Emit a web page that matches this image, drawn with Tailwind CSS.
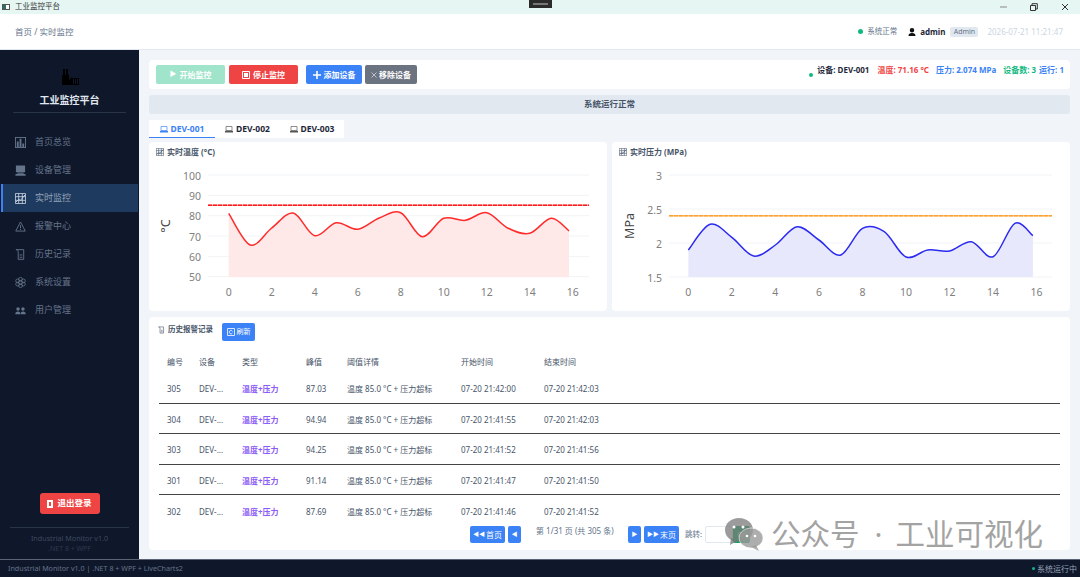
<!DOCTYPE html>
<html lang="zh-CN">
<head>
    <meta charset="UTF-8">
    <title>工业监控平台</title>
    <script src="https://cdn.jsdelivr.net/npm/@tailwindcss/browser@4"></script>
</head>
<body class="bg-[#f1f5f9] font-['Noto_Sans','Noto_Sans_CJK_SC',sans-serif]">
<svg width="0" height="0" class="absolute">
    <symbol id="i-bars" viewBox="0 0 12 12"><rect x="0.5" y="0.5" width="11" height="11" fill="none" stroke="currentColor"/><path fill="currentColor" d="M2 5h2v6H2zM5 2h2v9H5zM8 7h2v4H8z"/></symbol>
    <symbol id="i-device" viewBox="0 0 12 12"><path fill="currentColor" d="M1 0.5h10v7.5H1zM2.500 8.500h7v1h-7zM0.500 9.800h11v2h-11z"/></symbol>
    <symbol id="i-chart" viewBox="0 0 12 12"><path fill="none" stroke="currentColor" stroke-width="0.9" d="M.5.5h11v11H.5zM4 .5v11M8 .5v11M.5 4h11M.5 8h11"/><path fill="none" stroke="currentColor" d="M1 10l3-3 2 1 5-6"/></symbol>
    <symbol id="i-warn" viewBox="0 0 12 12"><path fill="none" stroke="currentColor" d="M6 1L.8 11h10.4z"/><path stroke="currentColor" d="M6 4.500v3.500M6 8.800v1"/></symbol>
    <symbol id="i-scroll" viewBox="0 0 12 12"><path fill="none" stroke="currentColor" d="M1 .7h8.500v10.600H3.500V2.500M1 .7c1.400 0 2 .6 2.500 1.800M5 6.500h3M5 9h3"/></symbol>
    <symbol id="i-gear" viewBox="0 0 12 12"><g fill="none" stroke="currentColor" stroke-width="0.9"><circle cx="6" cy="6" r="2"/><circle cx="6" cy="2.400" r="2"/><circle cx="6" cy="9.600" r="2"/><circle cx="2.800" cy="4.200" r="2"/><circle cx="9.200" cy="4.200" r="2"/><circle cx="2.800" cy="7.800" r="2"/><circle cx="9.200" cy="7.800" r="2"/></g></symbol>
    <symbol id="i-users" viewBox="0 0 12 12"><path fill="currentColor" d="M3.300 2.500a1.800 1.800 0 110 3.800 1.800 1.800 0 010-3.800zM8.700 2.500a1.800 1.800 0 110 3.800 1.800 1.800 0 010-3.800zM.3 10c0-2 1-3 3-3s2.500 1 2.500 3zM6.200 10c0-2 .5-3 2.500-3s3 1 3 3z"/></symbol>
    <symbol id="i-tab" viewBox="0 0 12 10"><path fill="none" stroke="currentColor" d="M1.500.5h9v6h-9z"/><path fill="currentColor" d="M0 7h12v2.500H0z"/></symbol>
</svg>

<div class="w-[1080px] h-[577px] flex flex-col overflow-hidden relative">
    <!-- title bar -->
    <div class="h-[14px] bg-[#e6f6f3] flex items-center pl-[2px] shrink-0 relative">
        <div class="w-[8px] h-[6px] border border-[#555] bg-[linear-gradient(90deg,#2f6f6a_50%,#fff_50%)]"></div>
        <span class="ml-[5px] text-[7.5px] text-[#333]">工业监控平台</span>
        <div class="absolute left-[529px] top-0 w-[23px] h-[8px] bg-[#2b2b2b] flex items-center justify-center"><div class="w-[15px] h-[2px] bg-[#777]"></div></div>
        <div class="ml-auto flex items-center text-[#444]">
            <svg class="w-[8px] h-[8px] mr-[22px]" viewBox="0 0 8 8"><path d="M0 4h7" stroke="#888" stroke-width="1"/></svg>
            <svg class="w-[8px] h-[8px] mr-[23px]" viewBox="0 0 8 8"><path d="M.5 2.500h5v5h-5zM2 2.500V.7h5.300V6H5.500" fill="none" stroke="#333"/></svg>
            <svg class="w-[8px] h-[8px] mr-[11px]" viewBox="0 0 8 8"><path d="M1 1l6 6M7 1L1 7" stroke="#333"/></svg>
        </div>
    </div>
    <!-- header -->
    <header class="h-[36px] bg-white border-b border-[#e2e8f0] flex items-center px-[15px] shrink-0">
        <span class="text-[8.5px] text-[#64748b] pt-[1px]">首页 / 实时监控</span>
        <div class="ml-auto flex items-center">
            <span class="w-[5px] h-[5px] rounded-full bg-[#10b981]"></span>
            <span class="ml-[4px] text-[7.500px] text-[#64748b]">系统正常</span>
            <svg class="ml-[11px] w-[8px] h-[8px]" viewBox="0 0 8 8"><path fill="#111" d="M4 0a2 2 0 110 4.500A2 2 0 014 0zM.5 8c0-2 1-3 3.500-3s3.500 1 3.500 3z"/></svg>
            <span class="ml-[4px] text-[8px] font-bold text-[#1e293b]">admin</span>
            <span class="ml-[5px] w-[28px] h-[10px] rounded-[2px] bg-[#e2e8f0] text-[7px] leading-[10px] text-center text-[#64748b]">Admin</span>
            <span class="ml-[9px] mr-[2px] text-[8px] text-[#cbd5e1]">2026-07-21 11:21:47</span>
        </div>
    </header>

    <div class="flex flex-1 min-h-0">
        <!-- sidebar -->
        <aside class="w-[139px] shrink-0 bg-[#0f172a] flex flex-col">
            <div class="h-[43px] pt-[18px] flex flex-col items-center">
                <svg class="w-[18px] h-[18px]" viewBox="0 0 18 18"><path fill="#000" d="M1 17V7h1V1h2v6h1V1h2v6h1v5l3-3v1h7v7zM12 11v5h1v-5zM14 11v5h1v-5zM16 11v5h1v-5z"/></svg>
            </div>
            <div class="text-center text-[10px] leading-[14px] font-bold text-[#e2e8f0]">工业监控平台</div>
            <div class="mx-[13px] mt-[5px] border-t border-[#283548]"></div>
            <nav class="mt-[15px] flex flex-col text-[9px] text-[#64748b]">
                <a class="h-[28px] flex items-center pl-[15px] gap-[9px]"><svg class="w-[11px] h-[11px]"><use href="#i-bars"/></svg>首页总览</a>
                <a class="h-[28px] flex items-center pl-[15px] gap-[9px]"><svg class="w-[11px] h-[11px]"><use href="#i-device"/></svg>设备管理</a>
                <a class="h-[28px] flex items-center pl-[12px] gap-[9px] ml-[1px] mr-[1px] bg-[#1e3a5f] border-l-2 border-[#3b82f6] text-[#94a3b8]"><svg class="w-[11px] h-[11px] text-[#cbd5e1]"><use href="#i-chart"/></svg>实时监控</a>
                <a class="h-[28px] flex items-center pl-[15px] gap-[9px]"><svg class="w-[11px] h-[11px]"><use href="#i-warn"/></svg>报警中心</a>
                <a class="h-[28px] flex items-center pl-[15px] gap-[9px]"><svg class="w-[11px] h-[11px]"><use href="#i-scroll"/></svg>历史记录</a>
                <a class="h-[28px] flex items-center pl-[15px] gap-[9px]"><svg class="w-[11px] h-[11px]"><use href="#i-gear"/></svg>系统设置</a>
                <a class="h-[28px] flex items-center pl-[15px] gap-[9px]"><svg class="w-[11px] h-[11px]"><use href="#i-users"/></svg>用户管理</a>
            </nav>
            <div class="mt-auto flex flex-col items-center">
                <button class="w-[60px] h-[21px] rounded-[3px] bg-[#ef4444] text-white text-[8.500px] font-bold flex items-center justify-center gap-[4px]">
                    <svg class="w-[6px] h-[8px]" viewBox="0 0 6 8"><path fill="#fff" d="M0 0h6v8H0z"/><path fill="#ef4444" d="M2 2h2v4H2z"/></svg>退出登录
                </button>
                <div class="w-[119px] mt-[13px] border-t border-[#283548]"></div>
                <div class="mt-[5px] text-[7.200px] leading-[11px] text-[#3b4a60]">Industrial Monitor v1.0</div>
                <div class="text-[7px] leading-[9px] mb-[6px] text-[#2c3a50]">.NET 8 + WPF</div>
            </div>
        </aside>

        <!-- main -->
        <main class="flex-1 min-w-0 px-[10px] pt-[10px] pb-[9px] flex flex-col bg-[#f1f5f9]">
            <!-- toolbar -->
            <div class="h-[29px] bg-white rounded-[4px] flex items-center pl-[7px] pr-[6px] shrink-0">
                <button class="w-[69px] h-[19px] rounded-[2px] bg-[#a0e4cb] text-white text-[8px] font-bold flex items-center justify-center gap-[3px]"><span class="text-[7px]">▶</span>开始监控</button>
                <button class="ml-[4px] w-[69px] h-[19px] rounded-[2px] bg-[#ef4444] text-white text-[8px] font-bold flex items-center justify-center gap-[3px]"><svg class="w-[8px] h-[8px]" viewBox="0 0 8 8"><path fill="none" stroke="#fff" d="M.5.5h7v7h-7z"/><path fill="#fff" d="M2 2h4v4H2z"/></svg>停止监控</button>
                <button class="ml-[8px] w-[56px] h-[19px] rounded-[2px] bg-[#3b82f6] text-white text-[8px] font-bold flex items-center justify-center gap-[3px]"><svg class="w-[8px] h-[8px]" viewBox="0 0 8 8"><path d="M4 0v8M0 4h8" stroke="#fff" stroke-width="1.600"/></svg>添加设备</button>
                <button class="ml-[3px] w-[52px] h-[19px] rounded-[2px] bg-[#6b7280] text-white text-[8px] font-bold flex items-center justify-center gap-[2px]"><svg class="w-[6px] h-[6px]" viewBox="0 0 6 6"><path d="M.5.5l5 5M5.500.5l-5 5" stroke="#d1d5db" stroke-width="0.800"/></svg>移除设备</button>
                <div class="ml-auto flex items-start text-[8px] font-bold h-[19px] -mt-[2px]">
                    <span class="w-[4px] h-[4px] rounded-full bg-[#10b981] mt-[9px] mr-[4px]"></span>
                    <span class="text-[#1e293b]">设备: DEV-001</span>
                    <span class="ml-[8px] text-[#ef4444]">温度: 71.16 °C</span>
                    <span class="ml-[7px] text-[#3b82f6]">压力: 2.074 MPa</span>
                    <span class="ml-[7px] text-[#10b981]">设备数: 3</span>
                    <span class="ml-[3px] text-[#3b82f6]">运行: 1</span>
                </div>
            </div>
            <!-- banner -->
            <div class="mt-[6px] h-[19px] rounded-[3px] bg-[#e2e8f0] flex items-center justify-center text-[8.500px] font-bold text-[#475569] shrink-0">系统运行正常</div>
            <!-- tabs -->
            <div class="mt-[6px] h-[18px] w-[195px] bg-white flex text-[8.500px] font-bold text-[#1e293b] shrink-0">
                <div class="w-[66px] pt-[1px] flex items-center justify-center gap-[3px] border-b border-[#3b82f6] text-[#3b82f6]"><svg class="w-[8px] h-[7px]"><use href="#i-tab"/></svg>DEV-001</div>
                <div class="w-[65px] pt-[1px] flex items-center justify-center gap-[3px]"><svg class="w-[8px] h-[7px] text-[#555]"><use href="#i-tab"/></svg>DEV-002</div>
                <div class="w-[64px] pt-[1px] flex items-center justify-center gap-[3px]"><svg class="w-[8px] h-[7px] text-[#555]"><use href="#i-tab"/></svg>DEV-003</div>
            </div>
            <!-- charts -->
            <div class="mt-[4px] h-[169px] flex gap-[5px] shrink-0">
                <div class="w-[458px] bg-white rounded-[4px] relative">
                    <div class="absolute left-[7px] top-[4px] flex items-center gap-[3px] text-[8px] font-bold text-[#475569]"><svg class="w-[8px] h-[8px]"><use href="#i-chart"/></svg>实时温度 (°C)</div>
                    <svg id="chart-temp" width="458" height="169" viewBox="149 142 458 169"></svg>
                </div>
                <div class="w-[458px] bg-white rounded-[4px] relative">
                    <div class="absolute left-[7px] top-[4px] flex items-center gap-[3px] text-[8px] font-bold text-[#475569]"><svg class="w-[8px] h-[8px]"><use href="#i-chart"/></svg>实时压力 (MPa)</div>
                    <svg id="chart-press" width="458" height="169" viewBox="612 142 458 169"></svg>
                </div>
            </div>
            <!-- history table -->
            <div class="mt-[6px] h-[233px] bg-white rounded-[4px] px-[10px] flex flex-col shrink-0">
                <div class="h-[25px] flex items-start shrink-0">
                    <div class="mt-[7px] flex items-center gap-[3px] text-[7.500px] font-bold text-[#475569] -ml-[1px]"><svg class="w-[7px] h-[8px]"><use href="#i-scroll"/></svg>历史报警记录</div>
                    <button class="ml-[9px] mt-[6px] w-[33px] h-[18px] rounded-[2px] bg-[#3b82f6] text-white text-[7px] flex items-center justify-center gap-[2px]"><svg class="w-[8px] h-[8px]" viewBox="0 0 8 8"><path fill="none" stroke="#fff" stroke-width="0.800" d="M.5.5h7v7h-7zM5.500 3.500a1.700 1.700 0 10-.1 1.500"/></svg>刷新</button>
                </div>
                <div id="alarm-table" class="mt-[10px] text-[8px] text-[#475569]"></div>
                <div class="mt-auto mb-[7px] h-[17px] flex items-center text-[8px] text-white relative shrink-0">
                    <div class="ml-[311px] w-[35px] h-[17px] rounded-[2px] bg-[#3b82f6] flex items-center justify-center gap-[1px]"><span class="text-[6px]">◀◀</span>首页</div>
                    <div class="ml-[3px] w-[13px] h-[17px] rounded-[2px] bg-[#3b82f6] flex items-center justify-center text-[6px]">◀</div>
                    <div class="ml-[15px] w-[77px] -mt-[8px] text-[#64748b] whitespace-nowrap">第 1/31 页 (共 305 条)</div>
                    <div class="ml-[15px] w-[13px] h-[17px] rounded-[2px] bg-[#3b82f6] flex items-center justify-center text-[6px]">▶</div>
                    <div class="ml-[3px] w-[35px] h-[17px] rounded-[2px] bg-[#3b82f6] flex items-center justify-center gap-[1px]"><span class="text-[6px]">▶▶</span>末页</div>
                    <div class="ml-[6px] text-[#64748b] text-[7.500px]">跳转:</div>
                    <div class="ml-[3px] w-[28px] h-[17px] rounded-[2px] border border-[#e2e8f0] bg-white"></div>
                    <div class="w-[17px] h-[17px] rounded-[2px] bg-[#10a765] flex items-center justify-center text-[6.500px]">Go</div>
                </div>
            </div>
        </main>
    </div>

    <!-- status bar -->
    <footer class="h-[18px] bg-[#0f172a] flex items-center pl-[8px] pr-[3px] text-[7.150px] shrink-0 border-t border-[#cbd5e1]/40">
        <span class="text-[#64748b]">Industrial Monitor v1.0 | .NET 8 + WPF + LiveCharts2</span>
        <span class="ml-auto w-[3px] h-[3px] rounded-full bg-[#10b981] mr-[2px]"></span>
        <span class="text-[#94a3b8] text-[8px]">系统运行中</span>
    </footer>

    <!-- watermark -->
    <div class="absolute left-[723px] top-[516px] flex items-center pointer-events-none text-[29.5px] leading-[36px] text-[#a3a3a3] whitespace-nowrap">
        <svg class="w-[42px] h-[36px]" viewBox="0 0 42 36">
            <ellipse cx="16" cy="14" rx="14" ry="12" fill="#7a7a7a" fill-opacity="0.75"/>
            <path d="M8 22l-1 7 7-4z" fill="#7a7a7a" fill-opacity="0.75"/>
            <ellipse cx="28" cy="22" rx="12" ry="10" fill="#9a9a9a" fill-opacity="0.8" stroke="#fff" stroke-width="0.500"/>
            <path d="M33 29l3 6-8-4z" fill="#9a9a9a" fill-opacity="0.8"/>
            <circle cx="11" cy="11" r="1.500" fill="#fff"/><circle cx="20" cy="11" r="1.500" fill="#fff"/>
            <circle cx="24" cy="20" r="1.300" fill="#fff"/><circle cx="32" cy="20" r="1.300" fill="#fff"/>
        </svg>
        <span class="ml-[6px]">公众号</span>
        <span class="ml-[15px]">·</span>
        <span class="ml-[13px]">工业可视化</span>
    </div>
</div>

<script>
    // fill the alarm table
    const rows = [
        ['305', '87.03', '07-20 21:42:00', '07-20 21:42:03'],
        ['304', '94.94', '07-20 21:41:55', '07-20 21:42:03'],
        ['303', '94.25', '07-20 21:41:52', '07-20 21:41:56'],
        ['301', '91.14', '07-20 21:41:47', '07-20 21:41:50'],
        ['302', '87.69', '07-20 21:41:46', '07-20 21:41:52']
    ];
    const gridCols = 'grid grid-cols-[32px_43px_64px_41px_114px_83px_1fr] pl-[8px] items-center';
    let html = `<div class="${gridCols} h-[21px] pb-[2px]"><span>编号</span><span>设备</span><span>类型</span><span>峰值</span><span>阈值详情</span><span>开始时间</span><span>结束时间</span></div>`;
    rows.forEach((r, i) => {
        const border = i < rows.length - 1 ? 'border-b border-[#444]' : '';
        html += `<div class="${gridCols} h-[30.5px] pt-[3px] ${border}"><span>${r[0]}</span><span>DEV-...</span><span class="text-[#8b5cf6] font-bold">温度+压力</span><span>${r[1]}</span><span>温度 85.0 °C + 压力超标</span><span>${r[2]}</span><span>${r[3]}</span></div>`;
    });
    document.getElementById('alarm-table').innerHTML = html;

    // catmull-rom through the sampled points
    function smooth(pts) {
        let d = `M${pts[0][0]} ${pts[0][1]}`;
        for (let i = 0; i < pts.length - 1; i++) {
            const p0 = pts[i - 1] || pts[i], p1 = pts[i], p2 = pts[i + 1], p3 = pts[i + 2] || p2;
            d += `C${p1[0] + (p2[0] - p0[0]) / 6} ${p1[1] + (p2[1] - p0[1]) / 6} ${p2[0] - (p3[0] - p1[0]) / 6} ${p2[1] - (p3[1] - p1[1]) / 6} ${p2[0]} ${p2[1]}`;
        }
        return d;
    }

    function drawChart(id, c) {
        let s = '';
        c.yTicks.forEach(t => {
            s += `<line x1="${c.gridL}" x2="${c.gridR}" y1="${t[1]}" y2="${t[1]}" stroke="#f1f3f5"/>`;
            s += `<text x="${c.gridL - 7}" y="${t[1] + 4.500}" text-anchor="end" font-size="10.500" fill="#808080">${t[0]}</text>`;
        });
        for (let i = 0; i <= 16; i += 2) {
            s += `<text x="${c.x0 + i * c.dx}" y="296" text-anchor="middle" font-size="10.500" fill="#808080">${i}</text>`;
        }
        const pts = c.ys.map((y, i) => [c.x0 + (i === 16 ? 15.83 : i) * c.dx, y]);
        const line = smooth(pts);
        s += `<path d="${line}L${pts[16][0]} 277L${pts[0][0]} 277Z" fill="${c.fill}"/>`;
        s += `<path d="${line}" fill="none" stroke="${c.color}" stroke-width="1.500"/>`;
        s += `<line x1="${c.gridL}" x2="${c.gridR}" y1="${c.limitY}" y2="${c.limitY}" stroke="${c.color2}" stroke-width="1.500"/>`;
        s += `<line x1="${c.gridL}" x2="${c.gridR}" y1="${c.limitY}" y2="${c.limitY}" stroke="${c.limit}" stroke-width="1.500" stroke-dasharray="4 1"/>`;
        s += `<text transform="translate(${c.unitX} 226) rotate(-90)" text-anchor="middle" font-size="12.500" fill="#444">${c.unit}</text>`;
        document.getElementById(id).innerHTML = s;
    }

    drawChart('chart-temp', {
        gridL: 208, gridR: 589, x0: 228.700, dx: 21.500, limitY: 205.300, unitX: 170, unit: '°C',
        color: '#ff2a2a', fill: '#ffe8e8', limit: '#ff1a1a', color2: '#ff9a9a',
        yTicks: [[100, 175], [90, 195.300], [80, 215.700], [70, 236], [60, 256.400], [50, 276.700]],
        ys: [213.300, 245, 228, 213, 235.700, 222.700, 229.300, 218, 212.700, 236.700, 218.300, 220.300, 212.700, 228.300, 233.300, 218.300, 231]
    });
    drawChart('chart-press', {
        gridL: 669, gridR: 1052, x0: 688.300, dx: 21.770, limitY: 215.700, unitX: 634, unit: 'MPa',
        color: '#2a2af0', fill: '#e8e8fd', limit: '#ffa033', color2: '#ffc27a',
        yTicks: [[3, 175], [2.5, 209], [2, 243], [1.5, 277]],
        ys: [250, 224.300, 237.300, 256, 245, 226.700, 240, 255, 228.300, 231.700, 257, 250, 251, 241.700, 256.700, 223.300, 235.700]
    });
</script>
</body>
</html>
